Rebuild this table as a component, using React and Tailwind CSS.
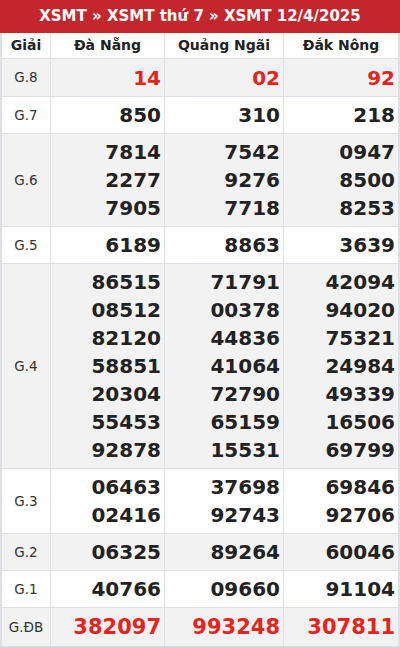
const provinces = ['Đà Nẵng', 'Quảng Ngãi', 'Đắk Nông']

const rows = [
  { label: 'G.8', red: true, values: [['14'], ['02'], ['92']] },
  { label: 'G.7', values: [['850'], ['310'], ['218']] },
  {
    label: 'G.6',
    values: [
      ['7814', '2277', '7905'],
      ['7542', '9276', '7718'],
      ['0947', '8500', '8253'],
    ],
  },
  { label: 'G.5', values: [['6189'], ['8863'], ['3639']] },
  {
    label: 'G.4',
    values: [
      ['86515', '08512', '82120', '58851', '20304', '55453', '92878'],
      ['71791', '00378', '44836', '41064', '72790', '65159', '15531'],
      ['42094', '94020', '75321', '24984', '49339', '16506', '69799'],
    ],
  },
  {
    label: 'G.3',
    values: [
      ['06463', '02416'],
      ['37698', '92743'],
      ['69846', '92706'],
    ],
  },
  { label: 'G.2', values: [['06325'], ['89264'], ['60046']] },
  { label: 'G.1', values: [['40766'], ['09660'], ['91104']] },
  { label: 'G.ĐB', red: true, big: true, values: [['382097'], ['993248'], ['307811']] },
]

export default function App() {
  return (
    <div className="w-[400px] bg-white font-['DejaVu_Sans',sans-serif]">
      <div className="border-x-2 border-b-2 border-[#dde1e6]">
        <div className="-mx-[2px] flex h-[33px] items-center justify-center bg-[#c5262d] text-[15px] font-bold text-white">
          XSMT » XSMT thứ 7 » XSMT 12/4/2025
        </div>
        <div className="grid grid-cols-[49px_114px_119px_1fr] text-[#222]">
          <div className="flex h-[26px] items-center justify-center border-r border-b border-[#dee2e6] text-[14px] font-bold">
            Giải
          </div>
          {provinces.map((p, i) => (
            <div
              key={p}
              className={
                'flex h-[26px] items-center justify-center border-b border-[#dee2e6] text-[14px] font-bold ' +
                (i < 2 ? 'border-r' : '')
              }
            >
              {p}
            </div>
          ))}
          {rows.map((row, r) => {
            const bg = r % 2 === 0 ? 'bg-[#f2f2f3]' : 'bg-white'
            const last = r === rows.length - 1
            return [
              <div
                key={row.label}
                className={
                  'flex items-center justify-center border-r border-[#dee2e6] text-[13.5px] text-[#333] ' +
                  bg +
                  (last ? '' : ' border-b')
                }
              >
                {row.label}
              </div>,
              ...row.values.map((nums, i) => (
                <div
                  key={row.label + i}
                  className={
                    'flex flex-col items-end justify-center pr-[3px] font-bold ' +
                    bg +
                    (row.big ? ' py-[5px] text-[21px] leading-[27px]' : ' py-[4px] text-[20px] leading-[28px]') +
                    (row.red ? ' min-h-[38px] text-[#e8231b]' : ' text-[#222]') +
                    (i < 2 ? ' border-r border-[#dee2e6]' : '') +
                    (last ? '' : ' border-b border-[#dee2e6]')
                  }
                >
                  {nums.map((n, k) => (
                    <span key={k}>{n}</span>
                  ))}
                </div>
              )),
            ]
          })}
        </div>
      </div>
    </div>
  )
}
